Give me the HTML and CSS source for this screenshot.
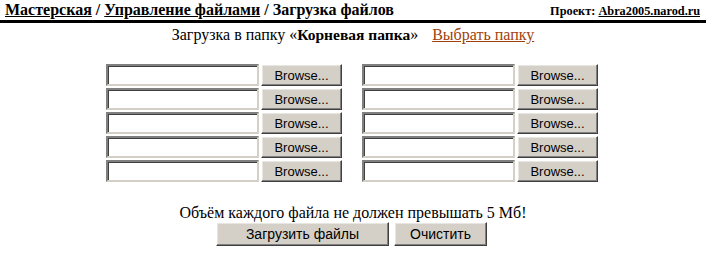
FILE: index.html
```html
<!DOCTYPE html>
<html>
<head>
<meta charset="utf-8">
<link rel="stylesheet" href="styles.css">
</head>
<body>
<div class="header">
  <div class="crumbs"><a href="#">Мастерская</a> / <a href="#">Управление файлами</a> / Загрузка файлов</div>
  <div class="project">Проект: <a href="#">Abra2005.narod.ru</a></div>
</div>
<div class="folder">Загрузка в папку «<b class="name">Корневая папка</b>» <a class="pick" href="#">Выбрать папку</a></div>
<div class="files">
  <div class="file"><span class="box"></span><span class="btn browse">Browse...</span></div>
  <div class="file"><span class="box"></span><span class="btn browse">Browse...</span></div>
  <div class="file"><span class="box"></span><span class="btn browse">Browse...</span></div>
  <div class="file"><span class="box"></span><span class="btn browse">Browse...</span></div>
  <div class="file"><span class="box"></span><span class="btn browse">Browse...</span></div>
  <div class="file"><span class="box"></span><span class="btn browse">Browse...</span></div>
  <div class="file"><span class="box"></span><span class="btn browse">Browse...</span></div>
  <div class="file"><span class="box"></span><span class="btn browse">Browse...</span></div>
  <div class="file"><span class="box"></span><span class="btn browse">Browse...</span></div>
  <div class="file"><span class="box"></span><span class="btn browse">Browse...</span></div>
</div>
<div class="note">Объём каждого файла не должен превышать 5 Мб!</div>
<div class="actions">
  <span class="btn upload">Загрузить файлы</span>
  <span class="btn clear">Очистить</span>
</div>
</body>
</html>
```
FILE: styles.css
```css
html, body {
  margin: 0;
  background: #fff;
  color: #000;
  font-family: "Liberation Serif", "Times New Roman", serif;
}
a { color: #000; }
.header {
  display: flex;
  justify-content: space-between;
  align-items: baseline;
  padding: 1px 6px 0 5px;
  height: 19px;
  border-bottom: 3px solid #000;
}
.crumbs {
  font-weight: bold;
  font-size: 16px;
}
.project {
  font-weight: bold;
  font-size: 12.3px;
}
.folder {
  text-align: center;
  font-size: 16px;
  margin-top: 3px;
  height: 21px;
}
.folder .name {
  font-size: 15.5px;
}
.folder .pick {
  color: #a0410d;
  margin-left: 10px;
}
.files {
  display: grid;
  grid-template-columns: 236px 236px;
  grid-auto-flow: column;
  grid-template-rows: repeat(5, 22px);
  column-gap: 20px;
  row-gap: 2px;
  justify-content: center;
  margin-top: 17px;
  padding-right: 2px;
}
.file {
  display: flex;
  gap: 2px;
  align-items: stretch;
}
.box {
  box-sizing: border-box;
  width: 153px;
  height: 22px;
  background: #fff;
  border: 2px solid;
  border-color: #808080 #d4d0c8 #d4d0c8 #808080;
  box-shadow: inset 1px 1px 0 #404040;
}
.btn {
  box-sizing: border-box;
  display: inline-flex;
  align-items: center;
  justify-content: center;
  background: #d4d0c8;
  font-family: "Liberation Sans", Arial, sans-serif;
  font-size: 13px;
  color: #000;
  border: 1px solid;
  border-color: #ffffff #404040 #404040 #ffffff;
  box-shadow: inset -1px -1px 0 #808080, inset 1px 1px 0 #e8e6e0;
}
.browse {
  width: 81px;
  height: 22px;
}
.note {
  text-align: center;
  font-size: 16px;
  margin-top: 22px;
  height: 18px;
}
.actions {
  display: flex;
  justify-content: center;
  gap: 5px;
  padding-right: 3px;
}
.upload {
  width: 173px;
  height: 24px;
  font-size: 14px;
}
.clear {
  width: 93px;
  height: 24px;
  font-size: 14px;
}
```
